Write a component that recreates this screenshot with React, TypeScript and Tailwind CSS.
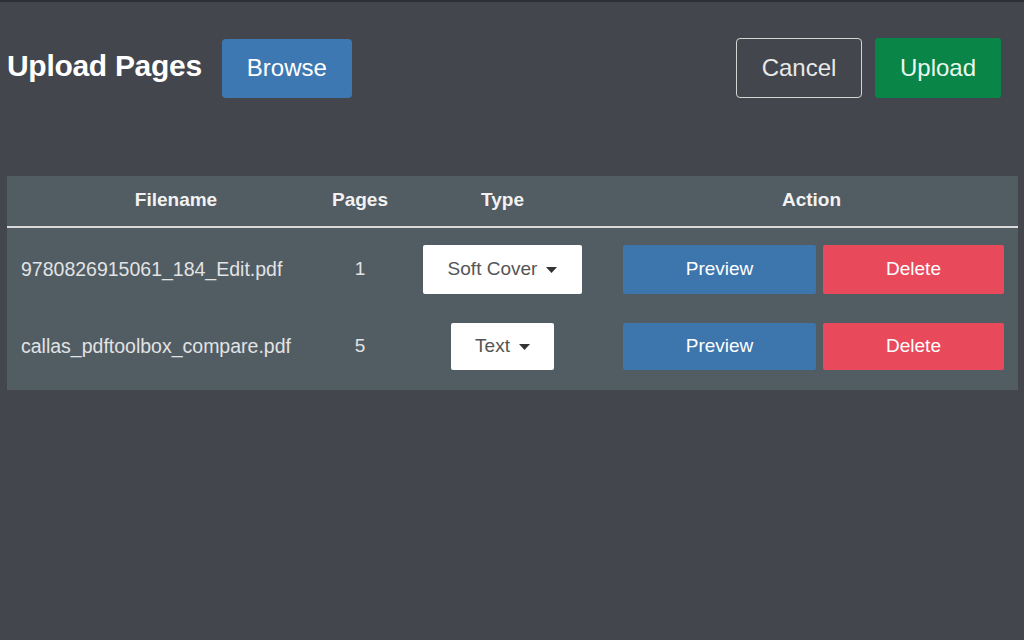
import { useState } from 'react';

type Row = { name: string; pages: number; type: string };

const rows: Row[] = [
  { name: '9780826915061_184_Edit.pdf', pages: 1, type: 'Soft Cover' },
  { name: 'callas_pdftoolbox_compare.pdf', pages: 5, type: 'Text' },
];

function Caret() {
  return (
    <svg width="11" height="6" viewBox="0 0 11 6" className="ml-[9px]">
      <path d="M0 0 L11 0 L5.5 6 Z" fill="#333" />
    </svg>
  );
}

export default function App() {
  const [files] = useState(rows);

  return (
    <div className="min-h-screen w-[1024px] h-[640px] bg-[#43464d] font-['Liberation_Sans',Arial,sans-serif] overflow-hidden">
      <div className="h-[2px] bg-[#2c2f35]" />

      {/* Header */}
      <div className="flex items-center pt-[36px] pl-[7px] pr-[23px]">
        <h1 className="text-[30px] font-bold text-white tracking-[-0.3px] -mt-[5px]">Upload Pages</h1>
        <button className="ml-[20px] w-[130px] h-[59px] rounded-[4px] bg-[#3e78b2] text-[24px] text-white">
          Browse
        </button>
        <div className="ml-auto flex gap-[13px]">
          <button className="w-[126px] h-[60px] rounded-[4px] border border-[#d4d4d4] text-[24px] text-[#e8e8e8]">
            Cancel
          </button>
          <button className="w-[126px] h-[60px] rounded-[3px] bg-[#0a8548] text-[24px] text-[#e9f8ee]">
            Upload
          </button>
        </div>
      </div>

      {/* Table */}
      <div className="mt-[78px] ml-[7px] w-[1011px] bg-[#525c63]">
        <div className="grid grid-cols-[313px_80px_205px_413px] h-[52px] items-center text-[19px] font-bold text-[#f2f2f2] border-b-2 border-[#dadada]">
          <div className="text-center pl-[25px] -mt-[2px]">Filename</div>
          <div className="text-center -mt-[2px]">Pages</div>
          <div className="text-center -mt-[2px]">Type</div>
          <div className="text-center -mt-[2px]">Action</div>
        </div>

        {files.map((f, i) => (
          <div
            key={f.name}
            className={
              i === 0
                ? 'grid grid-cols-[313px_80px_205px_413px] items-center pt-[17px] pb-[14px] text-[19px] text-[#e1e3e4]'
                : 'grid grid-cols-[313px_80px_205px_413px] items-center pt-[15px] pb-[20px] text-[19px] text-[#e1e3e4]'
            }
          >
            <div className="pl-[14px] whitespace-nowrap text-[19.5px]">{f.name}</div>
            <div className="text-center">{f.pages}</div>
            <div className="flex justify-center">
              <div
                className={
                  i === 0
                    ? 'flex items-center justify-center w-[159px] h-[49px] bg-white rounded-[2px] text-[#555]'
                    : 'flex items-center justify-center w-[103px] h-[47px] bg-white rounded-[2px] text-[#555]'
                }
              >
                {f.type}
                <Caret />
              </div>
            </div>
            <div className={i === 0 ? 'flex gap-[7px] pl-[18px] h-[49px]' : 'flex gap-[7px] pl-[18px] h-[47px]'}>
              <button className="w-[193px] rounded-[2px] bg-[#3d75ad] text-white text-[19px]">Preview</button>
              <button className="w-[181px] rounded-[2px] bg-[#e84a5b] text-white text-[19px]">Delete</button>
            </div>
          </div>
        ))}
      </div>
    </div>
  );
}
